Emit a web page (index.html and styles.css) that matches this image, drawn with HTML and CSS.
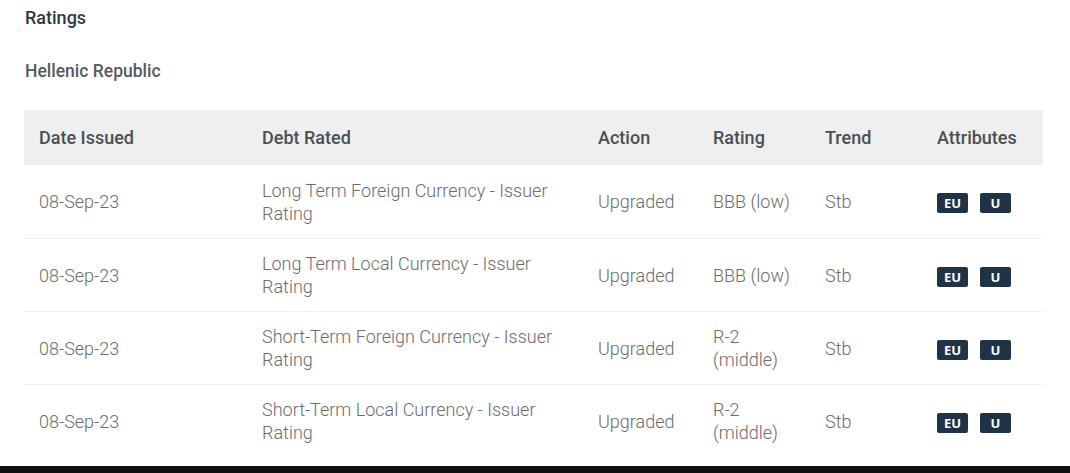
FILE: index.html
```html
<!DOCTYPE html>
<html>
<head>
<meta charset="utf-8">
<link rel="stylesheet" href="styles.css">
</head>
<body>
<div class="page">
  <h2 class="title">Ratings</h2>
  <h3 class="issuer">Hellenic Republic</h3>
  <table class="ratings">
    <colgroup>
      <col class="c-date"><col class="c-debt"><col class="c-action"><col class="c-rating"><col class="c-trend"><col class="c-attr">
    </colgroup>
    <thead>
      <tr><th>Date Issued</th><th>Debt Rated</th><th>Action</th><th>Rating</th><th>Trend</th><th>Attributes</th></tr>
    </thead>
    <tbody>
      <tr>
        <td>08-Sep-23</td>
        <td>Long Term Foreign Currency - Issuer Rating</td>
        <td>Upgraded</td>
        <td>BBB (low)</td>
        <td>Stb</td>
        <td><span class="badge">EU</span><span class="badge">U</span></td>
      </tr>
      <tr>
        <td>08-Sep-23</td>
        <td>Long Term Local Currency - Issuer Rating</td>
        <td>Upgraded</td>
        <td>BBB (low)</td>
        <td>Stb</td>
        <td><span class="badge">EU</span><span class="badge">U</span></td>
      </tr>
      <tr>
        <td>08-Sep-23</td>
        <td>Short-Term Foreign Currency - Issuer Rating</td>
        <td>Upgraded</td>
        <td>R-2 (middle)</td>
        <td>Stb</td>
        <td><span class="badge">EU</span><span class="badge">U</span></td>
      </tr>
      <tr>
        <td>08-Sep-23</td>
        <td>Short-Term Local Currency - Issuer Rating</td>
        <td>Upgraded</td>
        <td>R-2 (middle)</td>
        <td>Stb</td>
        <td><span class="badge">EU</span><span class="badge">U</span></td>
      </tr>
    </tbody>
  </table>
</div>
<div class="bottom-bar"></div>
</body>
</html>
```
FILE: styles.css
```css
html, body {
  margin: 0;
  padding: 0;
  background: #fff;
}
body {
  font-family: Roboto, "Liberation Sans", sans-serif;
  width: 1070px;
  height: 473px;
  overflow: hidden;
  position: relative;
}
.page {
  padding: 7px 27px 0 24px;
}
.title {
  margin: 0;
  font-size: 18px;
  font-weight: 500;
  color: #2f3842;
  line-height: 22px;
  padding-left: 1px;
}
.issuer {
  margin: 31px 0 0 0;
  font-size: 17.5px;
  font-weight: 500;
  color: #555b60;
  line-height: 22px;
  padding-left: 1px;
}
.ratings {
  margin-top: 28px;
  width: 1019px;
  border-collapse: collapse;
  table-layout: fixed;
}
.c-date { width: 223px; }
.c-debt { width: 336px; }
.c-action { width: 115px; }
.c-rating { width: 112px; }
.c-trend { width: 112px; }
.c-attr { width: 121px; }
.ratings th {
  background: #efefef;
  text-align: left;
  font-weight: 500;
  font-size: 18px;
  color: #4a4f55;
  height: 55px;
  padding: 0 0 0 15px;
  vertical-align: middle;
}
.ratings td {
  font-size: 18px;
  color: #6b6b6b;
  line-height: 23px;
  height: 72px;
  padding: 0 15px;
  vertical-align: middle;
  border-top: 1px solid #f0f0f0;
  font-weight: 300;
}
.ratings tbody tr:first-child td {
  border-top: none;
  height: 73px;
}
.ratings td:nth-child(2) {
  padding-right: 20px;
}
.badge {
  display: inline-block;
  box-sizing: border-box;
  width: 31px;
  height: 20px;
  background: #1f3347;
  color: #fff;
  font-weight: 700;
  font-size: 13px;
  line-height: 20px;
  border-radius: 2px;
  margin-right: 12px;
  vertical-align: middle;
  text-align: center;
  font-family: "Open Sans", sans-serif;
}
.bottom-bar {
  position: absolute;
  left: 0;
  bottom: 0;
  width: 1070px;
  height: 7px;
  background: #111;
}
```
